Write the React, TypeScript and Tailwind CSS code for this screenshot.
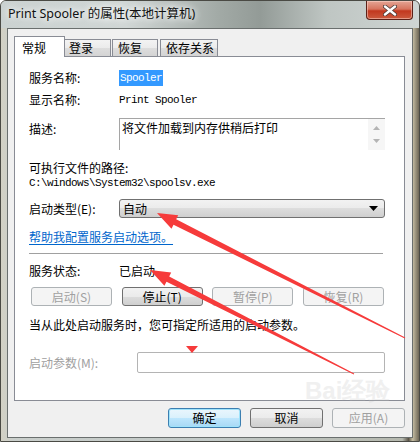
import React from 'react';

type Pt = [number, number];

// tapered annotation arrow, thick at the head, thin at the tail
function arrowPoints(tip: Pt, tail: Pt, headLen = 20, headHalf = 7.5, shaft = 3, end = 0.4) {
  const dx = tail[0] - tip[0];
  const dy = tail[1] - tip[1];
  const len = Math.hypot(dx, dy);
  const ux = dx / len;
  const uy = dy / len;
  const nx = -uy;
  const ny = ux;
  const bx = tip[0] + ux * headLen;
  const by = tip[1] + uy * headLen;
  const pts: Pt[] = [
    tip,
    [bx + nx * headHalf, by + ny * headHalf],
    [bx + nx * shaft, by + ny * shaft],
    [tail[0] + nx * end, tail[1] + ny * end],
    [tail[0] - nx * end, tail[1] - ny * end],
    [bx - nx * shaft, by - ny * shaft],
    [bx - nx * headHalf, by - ny * headHalf],
  ];
  return pts.map((p) => `${p[0].toFixed(1)},${p[1].toFixed(1)}`).join(' ');
}

const btn =
  'h-[19px] w-[81px] rounded-[3px] border flex items-center justify-center text-[12px] leading-none';
const btnNormal =
  'border-[#707070] bg-[linear-gradient(#f2f2f2,#ebebeb_50%,#dddddd_50%,#cfcfcf)] text-black';
const btnDisabled = 'border-[#adb2b5] bg-[#f4f4f4] text-[#a0a0a0]';
const mono = "font-['Liberation_Mono',monospace] text-[11px] tracking-[-0.6px]";

export default function App() {
  return (
    <div className="relative w-[420px] h-[442px] overflow-hidden rounded-t-[6px] border border-[#4a4a44] bg-[linear-gradient(90deg,#d3d1c4_0%,#c9cecb_3%,#c3cac8_50%,#b5b8ae_96%,#5b5548_97.5%,#c4bca2_98.5%,#6d6656_100%)] font-['Noto_Sans_CJK_SC',sans-serif] text-[12px] text-black">
      {/* Title bar */}
      <div className="flex h-[27px] bg-[linear-gradient(90deg,#cbd2d1_0%,#d0d6d5_30%,#a2aaa6_52%,#939b97_62%,#bfc6c3_78%,#cfd5d3_100%)]">
        <div className="pl-[7px] pt-[5px] font-['Noto_Sans','Noto_Sans_CJK_SC',sans-serif] text-[12.5px] leading-[16px] text-[#111] [text-shadow:0_0_6px_#fff,0_0_10px_#fff]">
          Print Spooler 的属性(本地计算机)
        </div>
        <div className="ml-auto mr-[6px] h-[19px] w-[47px] rounded-b-[4px] border border-t-0 border-[#5c2118] bg-[linear-gradient(#e4a595,#d6745e_45%,#c2381f_55%,#cc5a3e)] flex items-center justify-center shadow-[inset_0_0_0_1px_rgba(255,220,210,0.5)]">
          <svg width="14" height="11" viewBox="0 0 14 11">
            <path d="M2 1.5 L12 9.5 M12 1.5 L2 9.5" stroke="#4a3a36" strokeWidth="4" strokeLinecap="round" />
            <path d="M2 1.5 L12 9.5 M12 1.5 L2 9.5" stroke="#ffffff" strokeWidth="2.4" strokeLinecap="round" />
          </svg>
        </div>
      </div>

      {/* Client area */}
      <div className="mx-[6px] h-[410px] border border-[#6a6f6e] bg-[#f0f0f0] pl-[6px] pr-[7px] pt-[7px]">
        {/* Tabs */}
        <div className="flex h-[20px] items-end">
          <div className="relative z-10 -mb-px flex h-[21px] w-[51px] items-start border border-b-0 border-[#898c95] bg-white pl-[7px] pt-[2px]">
            常规
          </div>
          <div className="flex h-[17px] w-[46px] items-center border border-l-0 border-b-0 border-[#898c95] bg-[linear-gradient(#f3f3f3,#ebebeb_50%,#dddddd_50%,#d4d4d4)] pl-[4px]">
            登录
          </div>
          <div className="ml-[1px] flex h-[17px] w-[46px] items-center border border-b-0 border-[#898c95] bg-[linear-gradient(#f3f3f3,#ebebeb_50%,#dddddd_50%,#d4d4d4)] pl-[5px]">
            恢复
          </div>
          <div className="ml-[2px] flex h-[17px] w-[58px] items-center border border-b-0 border-[#898c95] bg-[linear-gradient(#f3f3f3,#ebebeb_50%,#dddddd_50%,#d4d4d4)] pl-[5px]">
            依存关系
          </div>
        </div>

        {/* Tab page */}
        <div className="h-[345px] w-[391px] border border-[#898c95] bg-white pl-[14px]">
          <div className="mt-[13px] flex h-[16px] items-center">
            <span className="w-[90px]">服务名称:</span>
            <span className={`${mono} bg-[#3399ff] px-[1px] text-white`}>Spooler</span>
          </div>
          <div className="mt-[6px] flex h-[16px] items-center">
            <span className="w-[90px]">显示名称:</span>
            <span className={mono}>Print Spooler</span>
          </div>
          <div className="mt-[10px] flex h-[32px] items-start">
            <span className="w-[90px] pt-[3px] leading-[16px]">描述:</span>
            <div className="flex h-[32px] w-[266px] border-l border-t border-[#a5a5a5] border-b-[#f3f3f3] border-r-[#f3f3f3]">
              <div className="flex-1 pl-[2px] pt-[1px] leading-[16px]">将文件加载到内存供稍后打印</div>
              <div className="flex w-[17px] flex-col items-center justify-center gap-[9px] bg-[#f6f6f6]">
                <svg width="7" height="4" viewBox="0 0 7 4"><path d="M0 4 L3.5 0 L7 4 Z" fill="#b4b4b4" /></svg>
                <svg width="7" height="4" viewBox="0 0 7 4"><path d="M0 0 L3.5 4 L7 0 Z" fill="#b4b4b4" /></svg>
              </div>
            </div>
          </div>
          <div className="mt-[10px] flex h-[16px] items-center">可执行文件的路径:</div>
          <div className={`flex h-[14px] items-center ${mono}`}>C:\windows\System32\spoolsv.exe</div>
          <div className="mt-[9px] flex h-[19px] items-center">
            <span className="w-[90px]">启动类型(E):</span>
            <div className="flex h-[19px] w-[266px] items-center rounded-[3px] border border-[#707070] bg-[linear-gradient(#f2f2f2,#ebebeb_50%,#dddddd_50%,#cfcfcf)] pl-[3px] pr-[6px]">
              <span className="flex-1">自动</span>
              <svg width="9" height="5" viewBox="0 0 9 5"><path d="M0 0 L9 0 L4.5 5 Z" fill="#000" /></svg>
            </div>
          </div>
          <div className="mt-[11px] flex h-[16px] items-center">
            <span className="text-[#0066cc] underline underline-offset-[2px]">帮助我配置服务启动选项。</span>
          </div>
          <div className="mt-[8px] mr-[21px] h-px bg-[#a0a0a0]" />
          <div className="mt-[9px] flex h-[16px] items-center">
            <span className="w-[90px]">服务状态:</span>
            <span>已启动</span>
          </div>
          <div className="mt-[8px] ml-[2px] flex w-[353px] justify-between">
            <div className={`${btn} ${btnDisabled}`}>启动(S)</div>
            <div className={`${btn} ${btnNormal}`}>停止(T)</div>
            <div className={`${btn} ${btnDisabled}`}>暂停(P)</div>
            <div className={`${btn} ${btnDisabled}`}>恢复(R)</div>
          </div>
          <div className="mt-[11px] flex h-[16px] items-center">当从此处启动服务时，您可指定所适用的启动参数。</div>
          <div className="mt-[19px] flex h-[21px] items-center">
            <span className="w-[108px] text-[#a0a0a0]">启动参数(M):</span>
            <div className="h-[21px] w-[248px] rounded-[2px] border border-[#b4b4b4] bg-white" />
          </div>
        </div>

        {/* Dialog buttons */}
        <div className="mt-[7px] flex w-[391px] justify-end gap-[9px]">
          <div className="flex h-[20px] w-[73px] items-center justify-center rounded-[3px] border border-[#3c7fb1] bg-[linear-gradient(#eaf6fd,#d9f0fc_50%,#bee6fd_50%,#a7d9f5)] shadow-[inset_0_0_0_1px_#9fe3fb]">
            确定
          </div>
          <div className="flex h-[20px] w-[73px] items-center justify-center rounded-[3px] border border-[#707070] bg-[linear-gradient(#f2f2f2,#ebebeb_50%,#dddddd_50%,#cfcfcf)]">
            取消
          </div>
          <div className="flex h-[20px] w-[73px] items-center justify-center rounded-[3px] border border-[#adb2b5] bg-[#f4f4f4] text-[#a0a0a0]">
            应用(A)
          </div>
        </div>
      </div>

      {/* faint watermark */}
      <div className="pointer-events-none absolute left-[304px] top-[376px] flex flex-col items-start text-[#c4c4c4] opacity-25">
        <span className="font-['Liberation_Sans',sans-serif] text-[24px] font-bold leading-[28px]">Bai经验</span>
      </div>

      {/* red annotation arrows */}
      <svg className="pointer-events-none absolute left-[-1px] top-[-1px]" width="420" height="442" viewBox="0 0 420 442">
        <polygon points={arrowPoints([157, 213], [405, 338])} fill="#f63b3b" />
        <polygon points={arrowPoints([150, 270], [354, 374])} fill="#f63b3b" />
        <polygon points="186,346 198,346 192,353" fill="#f63b3b" />
      </svg>
    </div>
  );
}
